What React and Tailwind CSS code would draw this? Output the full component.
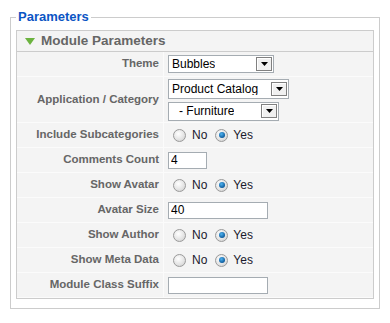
import { useState } from "react";

const font = { fontFamily: '"Liberation Sans", Arial, sans-serif' };

function FakeSelect({ value, width, height = "h-[18px]", indent = "pl-[3px]" }) {
  return (
    <div
      className={`flex items-center justify-between bg-white border border-[#a5acb2] ${height} ${width}`}
    >
      <span className={`${indent} text-[12px] leading-none text-black truncate`}>{value}</span>
      <span className="mr-[1px] flex h-[14px] w-[16px] items-center justify-center border border-[#808080] bg-[#f0f0f0] shadow-[inset_1px_1px_0_#fff]">
        <svg width="7" height="4" viewBox="0 0 7 4">
          <path d="M0 0h7L3.5 4z" fill="#000" />
        </svg>
      </span>
    </div>
  );
}

function Radio({ checked, onClick }) {
  return (
    <span
      onClick={onClick}
      className="flex h-[13px] w-[13px] items-center justify-center rounded-full border border-[#9a9a9a] bg-[radial-gradient(circle_at_40%_35%,#ffffff,#e2e2e2_60%,#c8c8c8)]"
    >
      {checked && (
        <span className="h-[6px] w-[6px] rounded-full bg-[radial-gradient(circle_at_40%_35%,#4fb3f0,#0d5c9e_70%,#083c6a)]" />
      )}
    </span>
  );
}

function YesNo({ initial = "yes" }) {
  const [val, setVal] = useState(initial);
  return (
    <div className="flex items-center pl-[5px] text-[12px] text-[#1a1a2e]">
      <Radio checked={val === "no"} onClick={() => setVal("no")} />
      <span className="ml-[6px] mr-[8px]">No</span>
      <Radio checked={val === "yes"} onClick={() => setVal("yes")} />
      <span className="ml-[5px]">Yes</span>
    </div>
  );
}

function TextInput({ value, width }) {
  return (
    <input
      defaultValue={value}
      className={`h-[17px] ${width} border border-[#a5acb2] bg-white px-[2px] text-[12px] text-black outline-none`}
      style={font}
    />
  );
}

function Row({ label, children, tall, last }) {
  return (
    <div className={`flex ${last ? "" : "border-b border-[#fbfbfb]"}`}>
      <div
        className={`flex w-[147px] shrink-0 items-center justify-end border-r border-[#fbfbfb] pr-[4px] text-[11.5px] font-bold text-[#666666] ${
          tall ? "h-[45px]" : "h-[24px]"
        }`}
      >
        {label}
      </div>
      <div className="flex flex-1 items-center pl-[4px]">{children}</div>
    </div>
  );
}

export default function App() {
  return (
    <div className="min-h-[323px] bg-white px-[10px] pt-[9px]" style={font}>
      <fieldset className="border border-[#cccccc] px-[5px] pb-[9px]">
        <legend className="px-[2px] text-[13px] font-bold leading-[16px] text-[#0b55c4]">
          Parameters
        </legend>
        <div className="mt-[5px] border border-[#cccccc] bg-[#f4f4f4]">
          <div className="flex h-[21px] items-center border-b border-[#cccccc] pl-[8px]">
            <svg width="10" height="7" viewBox="0 0 10 7">
              <path d="M0 0h10L5 7z" fill="#6cb33f" />
            </svg>
            <span className="ml-[6px] text-[13.5px] font-bold text-[#666666]">Module Parameters</span>
          </div>

          <Row label="Theme">
            <FakeSelect value="Bubbles" width="w-[106px]" />
          </Row>
          <Row label="Application / Category" tall>
            <div className="flex flex-col gap-[3px]">
              <FakeSelect value="Product Catalog" width="w-[121px]" height="h-[20px]" />
              <FakeSelect value="- Furniture" width="w-[111px]" height="h-[19px]" indent="pl-[10px]" />
            </div>
          </Row>
          <Row label="Include Subcategories">
            <YesNo />
          </Row>
          <Row label="Comments Count">
            <TextInput value="4" width="w-[39px]" />
          </Row>
          <Row label="Show Avatar">
            <YesNo />
          </Row>
          <Row label="Avatar Size">
            <TextInput value="40" width="w-[100px]" />
          </Row>
          <Row label="Show Author">
            <YesNo />
          </Row>
          <Row label="Show Meta Data">
            <YesNo />
          </Row>
          <Row label="Module Class Suffix">
            <TextInput value="" width="w-[100px]" />
          </Row>
        </div>
      </fieldset>
    </div>
  );
}
